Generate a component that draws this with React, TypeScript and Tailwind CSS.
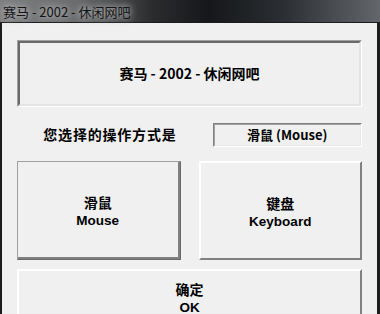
const cjk = "font-['Noto_Sans_CJK_SC',sans-serif]";
const latin = "font-['Liberation_Sans','Noto_Sans_CJK_SC',sans-serif]";

const App = () => {
  return (
    <div className={`w-[380px] h-[314px] overflow-hidden bg-[#3a3c3e] ${cjk}`}>
      {/* TITLE BAR */}
      <div className="h-[22px] flex items-center pl-[3px] bg-[linear-gradient(90deg,#7c7e80_0%,#6a6c6e_20%,#2a2c2e_40%,#15171a_55%,#2c2f33_75%,#63676b_100%)]">
        <span className="text-[13px] leading-none text-[#151515] [text-shadow:0_0_6px_#c8c8c8,0_0_10px_#a8a8a8]">
          赛马 - 2002 - 休闲网吧
        </span>
      </div>

      {/* WINDOW BODY */}
      <div className="h-[292px] bg-[#f0f0f0] border-t border-l-2 border-r-[3px] border-[#1c1c1c] pl-[15px] pr-[15px] pt-[17px] flex flex-col">
        {/* Group frame */}
        <div className="h-[67px] shrink-0 border border-t-[#a0a0a0] border-l-[#a0a0a0] border-b-white border-r-white">
          <div className="h-full border-2 border-t-[#6a6a6a] border-l-[#6a6a6a] border-b-[#e4e4e4] border-r-[#e4e4e4] flex items-center justify-center">
            <span className="text-[14px] font-bold text-black">赛马 - 2002 - 休闲网吧</span>
          </div>
        </div>

        {/* Current mode row */}
        <div className="mt-[16px] grid grid-cols-2 gap-[18px] h-[22px] shrink-0">
          <div className="flex items-center justify-end pr-[4px]">
            <span className="text-[14px] font-bold text-black tracking-[0.8px]">您选择的操作方式是</span>
          </div>
          <div className="ml-[14px] border border-t-[#808080] border-l-[#808080] border-b-white border-r-white">
            <div className="h-full border border-t-[#a0a0a0] border-l-[#a0a0a0] border-b-[#e8e8e8] border-r-[#e8e8e8] flex items-center justify-center">
              <span className="text-[13px] font-bold text-black">滑鼠 (Mouse)</span>
            </div>
          </div>
        </div>

        {/* Mode buttons */}
        <div className="mt-[16px] grid grid-cols-2 gap-[18px] h-[99px] shrink-0">
          <button className="border border-t-[#a0a0a0] border-l-[#a0a0a0] border-b-[#696969] border-r-[#696969] bg-[#f0f0f0]">
            <div className="h-full border-b-2 border-r-2 border-b-[#808080] border-r-[#808080] flex flex-col items-center justify-center">
              <span className="text-[14px] font-bold leading-[21px] text-black">滑鼠</span>
              <span className={`${latin} text-[13.5px] font-bold leading-[15px] text-black`}>Mouse</span>
            </div>
          </button>
          <button className="border-2 border-t-white border-l-white border-b-[#808080] border-r-[#808080] bg-[#f0f0f0]">
            <div className="h-full flex flex-col items-center justify-center">
              <span className="text-[14px] font-bold leading-[21px] text-black">键盘</span>
              <span className={`${latin} text-[13.5px] font-bold leading-[15px] text-black`}>Keyboard</span>
            </div>
          </button>
        </div>

        {/* Confirm */}
        <button className="mt-[9px] h-[56px] shrink-0 border-2 border-t-white border-l-white border-b-[#808080] border-r-[#808080] bg-[#f0f0f0] flex flex-col items-center justify-start pt-[8px]">
          <span className="text-[14px] font-bold leading-[21px] text-black">确定</span>
          <span className={`${latin} text-[13.5px] font-bold leading-[15px] text-black`}>OK</span>
        </button>
      </div>
    </div>
  );
};

export default App;
